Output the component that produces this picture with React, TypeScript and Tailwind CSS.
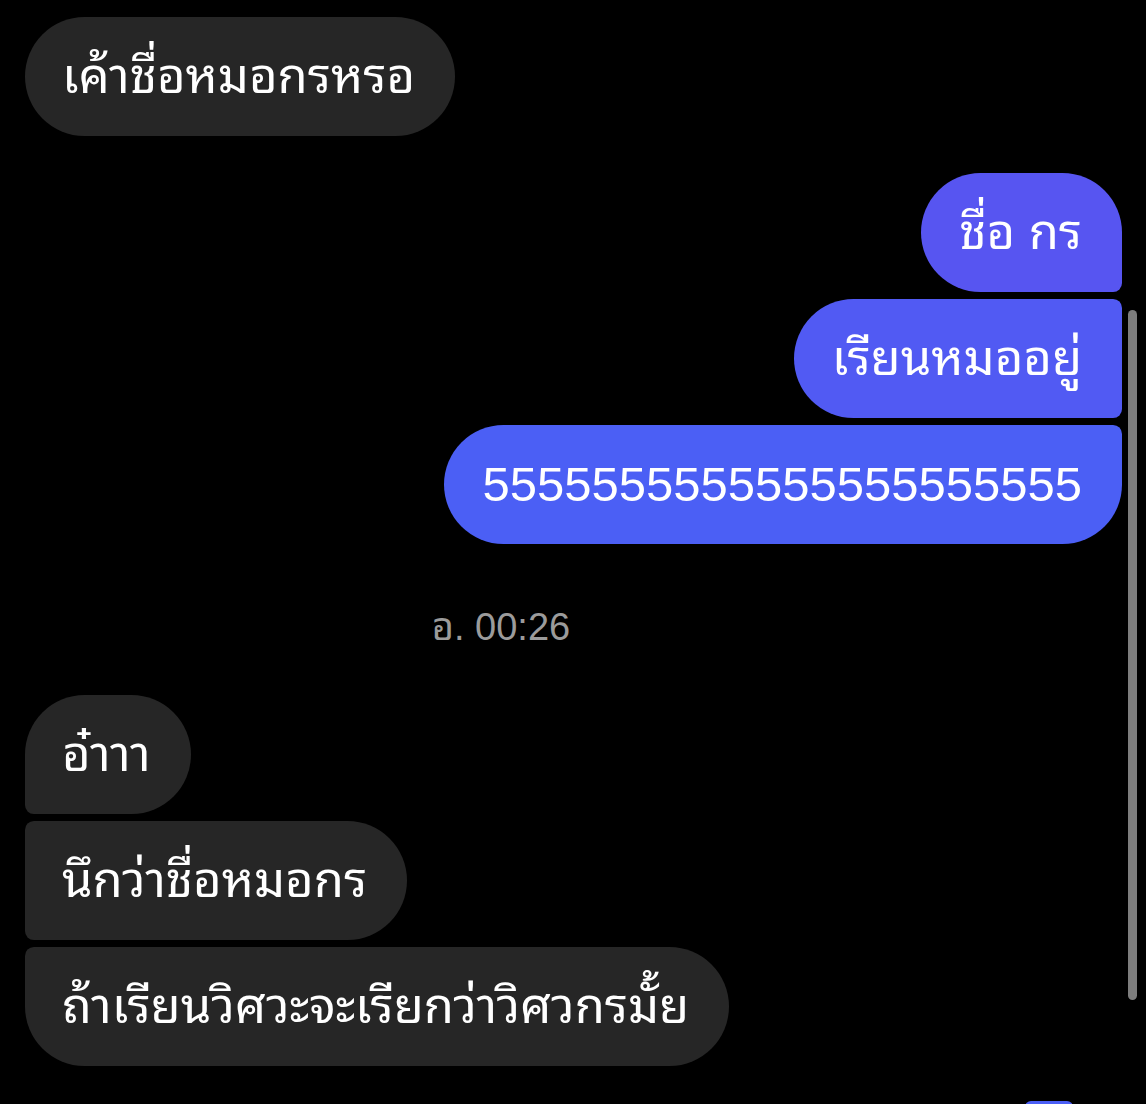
import React from 'react';

type Msg = { text: string; shape: string };

const incomingTop: Msg[] = [
  { text: 'เค้าชื่อหมอกรหรอ', shape: 'rounded-[60px]' },
];

const outgoing: Msg[] = [
  { text: 'ชื่อ กร', shape: 'rounded-[60px] rounded-br-[9px] bg-[#5755f1]' },
  { text: 'เรียนหมออยู่', shape: 'rounded-l-[60px] rounded-r-[9px] bg-[#515af3]' },
  { text: '5555555555555555555555', shape: 'rounded-[60px] rounded-tr-[9px] bg-[#4b5ff5]' },
];

const incomingBottom: Msg[] = [
  { text: 'อ๋าาา', shape: 'rounded-[60px] rounded-bl-[9px]' },
  { text: 'นึกว่าชื่อหมอกร', shape: 'rounded-r-[60px] rounded-l-[9px]' },
  { text: 'ถ้าเรียนวิศวะจะเรียกว่าวิศวกรมั้ย', shape: 'rounded-[60px] rounded-tl-[9px]' },
];

function Bubble({ msg, out }: { msg: Msg; out?: boolean }) {
  return (
    <div
      className={`flex h-[119px] items-center text-[49px] leading-none text-white ${
        out ? 'pl-[38px] pr-[40px]' : 'bg-[#262626] pl-[37px] pr-[40px]'
      } ${msg.shape}`}
    >
      {msg.text}
    </div>
  );
}

export default function App() {
  return (
    <div
      className="relative h-[1104px] w-full overflow-hidden bg-black pl-[25px] pr-[24px] pt-[17px]"
      style={{ fontFamily: '"Liberation Sans", "Noto Sans Thai Looped", "Noto Sans Thai", "Noto Sans", sans-serif' }}
    >
      <div className="flex flex-col items-start">
        {incomingTop.map(m => (
          <Bubble key={m.text} msg={m} />
        ))}
      </div>

      <div className="mt-[37px] flex flex-col items-end gap-[7px]">
        {outgoing.map(m => (
          <Bubble key={m.text} msg={m} out />
        ))}
      </div>

      <div className="flex h-[151px] items-start pl-[380px] pt-[64px]">
        <span className="w-[192px] text-center text-[38px] leading-none text-[#9b9b9b]">อ. 00:26</span>
      </div>

      <div className="flex flex-col items-start gap-[7px]">
        {incomingBottom.map(m => (
          <Bubble key={m.text} msg={m} />
        ))}
      </div>

      {/* scrollbar */}
      <div className="absolute right-[9px] top-[310px] h-[690px] w-[9px] rounded-full bg-[#7d7d7d]" />
      {/* next bubble peeking in at the bottom */}
      <div className="absolute left-[1025px] top-[1101px] h-[10px] w-[48px] rounded-t-[6px] bg-[#4b5ff5]" />
    </div>
  );
}
